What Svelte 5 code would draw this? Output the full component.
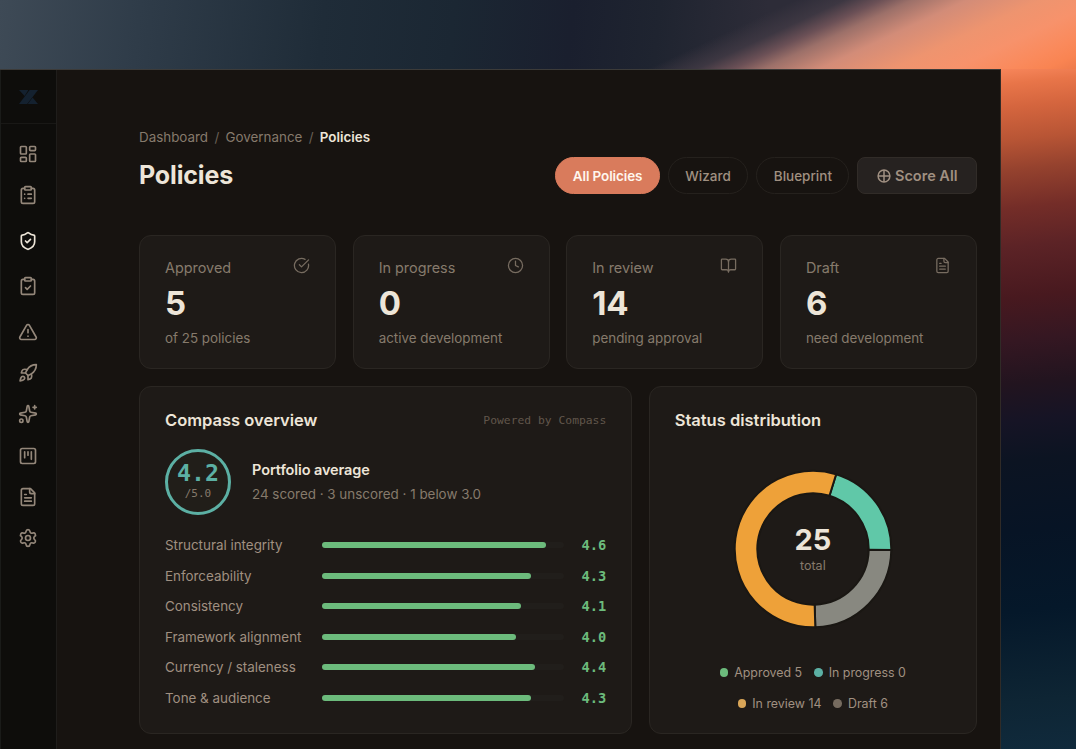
<script>
  // lucide outlines, 24x24 viewbox
  const icons = {
    dashboard:
      '<rect width="7" height="9" x="3" y="3" rx="1"/><rect width="7" height="5" x="14" y="3" rx="1"/><rect width="7" height="9" x="14" y="12" rx="1"/><rect width="7" height="5" x="3" y="16" rx="1"/>',
    clipboardList:
      '<rect width="8" height="4" x="8" y="2" rx="1"/><path d="M16 4h2a2 2 0 0 1 2 2v14a2 2 0 0 1-2 2H6a2 2 0 0 1-2-2V6a2 2 0 0 1 2-2h2"/><path d="M12 11h4M12 16h4M8 11h.01M8 16h.01"/>',
    shield:
      '<path d="M20 13c0 5-3.5 7.5-7.66 8.95a1 1 0 0 1-.67-.01C7.5 20.5 4 18 4 13V6a1 1 0 0 1 1-1c2 0 4.5-1.2 6.24-2.72a1.17 1.17 0 0 1 1.52 0C14.51 3.81 17 5 19 5a1 1 0 0 1 1 1z"/><path d="m9 12 2 2 4-4"/>',
    clipboardCheck:
      '<rect width="8" height="4" x="8" y="2" rx="1"/><path d="M16 4h2a2 2 0 0 1 2 2v14a2 2 0 0 1-2 2H6a2 2 0 0 1-2-2V6a2 2 0 0 1 2-2h2"/><path d="m9 14 2 2 4-4"/>',
    alert:
      '<path d="m21.73 18-8-14a2 2 0 0 0-3.48 0l-8 14A2 2 0 0 0 4 21h16a2 2 0 0 0 1.73-3"/><path d="M12 9v4M12 17h.01"/>',
    rocket:
      '<path d="M4.5 16.5c-1.5 1.26-2 5-2 5s3.74-.5 5-2c.71-.84.7-2.13-.09-2.91a2.18 2.18 0 0 0-2.91-.09z"/><path d="m12 15-3-3a22 22 0 0 1 2-3.95A12.88 12.88 0 0 1 22 2c0 2.72-.78 7.5-6 11a22.35 22.35 0 0 1-4 2z"/><path d="M9 12H4s.55-3.03 2-4c1.62-1.08 5 0 5 0"/><path d="M12 15v5s3.03-.55 4-2c1.08-1.62 0-5 0-5"/>',
    sparkles:
      '<path d="M11.017 2.814a1 1 0 0 1 1.966 0l1.051 5.558a2 2 0 0 0 1.594 1.594l5.558 1.051a1 1 0 0 1 0 1.966l-5.558 1.051a2 2 0 0 0-1.594 1.594l-1.051 5.558a1 1 0 0 1-1.966 0l-1.051-5.558a2 2 0 0 0-1.594-1.594l-5.558-1.051a1 1 0 0 1 0-1.966l5.558-1.051a2 2 0 0 0 1.594-1.594z"/><path d="M20 2v4M22 4h-4"/><circle cx="4" cy="20" r="2"/>',
    kanban:
      '<rect width="18" height="18" x="3" y="3" rx="2"/><path d="M8 7v7M12 7v4M16 7v9"/>',
    file:
      '<path d="M15 2H6a2 2 0 0 0-2 2v16a2 2 0 0 0 2 2h12a2 2 0 0 0 2-2V7Z"/><path d="M14 2v4a2 2 0 0 0 2 2h4"/><path d="M10 9H8M16 13H8M16 17H8"/>',
    settings:
      '<path d="M9.671 4.136a2.34 2.34 0 0 1 4.659 0 2.34 2.34 0 0 0 3.319 1.915 2.34 2.34 0 0 1 2.33 4.033 2.34 2.34 0 0 0 0 3.831 2.34 2.34 0 0 1-2.33 4.033 2.34 2.34 0 0 0-3.319 1.915 2.34 2.34 0 0 1-4.659 0 2.34 2.34 0 0 0-3.32-1.915 2.34 2.34 0 0 1-2.33-4.033 2.34 2.34 0 0 0 0-3.831A2.34 2.34 0 0 1 6.35 6.051a2.34 2.34 0 0 0 3.319-1.915"/><circle cx="12" cy="12" r="3"/>',
    check:
      '<path d="M21.801 10A10 10 0 1 1 17 3.335"/><path d="m9 11 3 3L22 4"/>',
    clock: '<circle cx="12" cy="12" r="10"/><path d="M12 6v6l4 2"/>',
    book: '<path d="M12 7v14"/><path d="M3 18a1 1 0 0 1-1-1V4a1 1 0 0 1 1-1h5a4 4 0 0 1 4 4 4 4 0 0 1 4-4h5a1 1 0 0 1 1 1v13a1 1 0 0 1-1 1h-6a3 3 0 0 0-3 3 3 3 0 0 0-3-3z"/>',
  };

  const navGroups = [
    ["dashboard", "clipboardList"],
    ["shield"],
    ["clipboardCheck"],
    ["alert", "rocket", "sparkles", "kanban", "file", "settings"],
  ];
  const active = "shield";

  const stats = [
    { label: "Approved", value: 5, note: "of 25 policies", icon: "check" },
    { label: "In progress", value: 0, note: "active development", icon: "clock" },
    { label: "In review", value: 14, note: "pending approval", icon: "book" },
    { label: "Draft", value: 6, note: "need development", icon: "file" },
  ];

  const scores = [
    { label: "Structural integrity", value: 4.6, fill: 92.3 },
    { label: "Enforceability", value: 4.3, fill: 86.2 },
    { label: "Consistency", value: 4.1, fill: 82 },
    { label: "Framework alignment", value: 4.0, fill: 80 },
    { label: "Currency / staleness", value: 4.4, fill: 88 },
    { label: "Tone & audience", value: 4.3, fill: 86.2 },
  ];

  const legend = [
    [
      { label: "Approved 5", tone: "green" },
      { label: "In progress 0", tone: "teal" },
    ],
    [
      { label: "In review 14", tone: "amber" },
      { label: "Draft 6", tone: "gray" },
    ],
  ];

  // donut slices, degrees clockwise from the top
  const slices = [
    { from: 17.2, to: 90.8, color: "#60c8a8" },
    { from: 90.8, to: 178.3, color: "#888880" },
    { from: 178.3, to: 377.2, color: "#eea139" },
  ];

  function point(r, deg) {
    const a = (deg * Math.PI) / 180;
    return `${80 + r * Math.sin(a)} ${80 - r * Math.cos(a)}`;
  }

  function slicePath({ from, to }) {
    const big = to - from > 180 ? 1 : 0;
    return `M${point(78.3, from)}A78.3 78.3 0 ${big} 1 ${point(78.3, to)}L${point(55.7, to)}A55.7 55.7 0 ${big} 0 ${point(55.7, from)}Z`;
  }
</script>

<div class="desktop">
  <div class="window">
    <aside class="sidebar">
      <div class="logo">
        <svg width="19" height="14" viewBox="0 0 19 14">
          <path d="M0 0h9.4L5.6 6z" />
          <path d="M10.6 0H19L8.2 14H0z" />
          <path d="M13.6 7.6 19 14H8.8z" />
        </svg>
      </div>
      <nav>
        {#each navGroups as group}
          <div class="nav-group">
            {#each group as name}
              <a href="#{name}" class="nav-item" class:active={name === active} aria-label={name}>
                <svg class="icon" viewBox="0 0 24 24">{@html icons[name]}</svg>
              </a>
            {/each}
          </div>
        {/each}
      </nav>
    </aside>

    <main>
      <div class="breadcrumb">
        <span>Dashboard</span><span class="sep">/</span><span>Governance</span><span class="sep">/</span><strong>Policies</strong>
      </div>
      <header>
        <h1>Policies</h1>
        <div class="actions">
          <button class="pill primary">All Policies</button>
          <button class="pill">Wizard</button>
          <button class="pill">Blueprint</button>
          <button class="score-all">
            <svg width="14" height="14" viewBox="0 0 14 14">
              <circle cx="7" cy="7" r="5.9" />
              <path d="M1 7h12M7 1v12" />
            </svg>
            Score All
          </button>
        </div>
      </header>

      <section class="stats">
        {#each stats as stat}
          <div class="card stat">
            <div class="stat-head">
              <span>{stat.label}</span>
              <svg class="icon" viewBox="0 0 24 24">{@html icons[stat.icon]}</svg>
            </div>
            <div class="stat-value">{stat.value}</div>
            <div class="stat-note">{stat.note}</div>
          </div>
        {/each}
      </section>

      <section class="panels">
        <div class="card panel">
          <div class="panel-head">
            <h2>Compass overview</h2>
            <span class="powered">Powered by Compass</span>
          </div>
          <div class="portfolio">
            <div class="ring">
              <b>4.2</b>
              <small>/5.0</small>
            </div>
            <div>
              <div class="portfolio-title">Portfolio average</div>
              <div class="portfolio-note">24 scored · 3 unscored · 1 below 3.0</div>
            </div>
          </div>
          <div class="scores">
            {#each scores as score}
              <div class="score">
                <span class="score-label">{score.label}</span>
                <div class="track"><div class="fill" style={`width: ${score.fill}%`}></div></div>
                <span class="score-value">{score.value.toFixed(1)}</span>
              </div>
            {/each}
          </div>
        </div>

        <div class="card panel">
          <div class="panel-head">
            <h2>Status distribution</h2>
          </div>
          <div class="donut">
            <svg width="160" height="160" viewBox="0 0 160 160">
              {#each slices as slice}
                <path d={slicePath(slice)} fill={slice.color} />
              {/each}
            </svg>
            <div class="donut-label">
              <b>25</b>
              <span>total</span>
            </div>
          </div>
          <div class="legend">
            {#each legend as row}
              <div class="legend-row">
                {#each row as item}
                  <span class="legend-item"><i class={item.tone}></i>{item.label}</span>
                {/each}
              </div>
            {/each}
          </div>
        </div>
      </section>
    </main>
  </div>
</div>

<style>
  :global(body) {
    margin: 0;
    overflow: hidden;
  }
  .desktop {
    width: 1076px;
    height: 749px;
    box-sizing: border-box;
    padding-top: 69px;
    overflow: hidden;
    font-family: Inter, sans-serif;
    color: #ede5d8;
    /* sunset streak over the slate sky, then the strip right of the window */
    background:
      linear-gradient(
          155deg,
          transparent 65%,
          #3d3742 69%,
          #6b5056 72%,
          #9c7069 74.5%,
          #d28c78 79%,
          #ee946f 85%,
          #f7926b 90%,
          #fa8a5c 94.5%,
          #f98452 97.5%,
          #ee7b4c 100%
        )
        0 0 / 1076px 69px no-repeat,
      linear-gradient(96deg, #3e4a56, #2f3c49 13%, #1f2c38 30%, #1b2733 42%, #1a1f2e 53%, #1f2430 61%, #2d2c38 71%)
        0 0 / 1076px 69px no-repeat,
      linear-gradient(
          174deg,
          #f6855a 69px,
          #e87549 84px,
          #d4653e 108px,
          #b85535 140px,
          #95422e 170px,
          #742d28 208px,
          #5c2326 247px,
          #48191f 297px,
          #351722 340px,
          #22141f 383px,
          #161425 420px,
          #0c1422 460px,
          #071425 530px,
          #05182a 610px,
          #0e2534 700px,
          #102a3c 752px
        )
        1001px 0 / 75px 749px no-repeat;
  }
  .window {
    display: flex;
    width: 1001px;
    height: 680px;
    box-sizing: border-box;
    border-top: 1px solid #3c3b39;
    border-right: 1px solid #302b27;
    background: #171310;
  }

  /* sidebar */
  .sidebar {
    width: 57px;
    box-sizing: border-box;
    border-left: 1px solid #1a1b19;
    border-right: 1px solid #1f1d1b;
    background: #0e0d0b;
  }
  .logo {
    display: flex;
    align-items: center;
    justify-content: center;
    height: 53px;
    padding-right: 1px;
    border-bottom: 1px solid #191816;
  }
  .logo svg {
    fill: #14212f;
  }
  nav {
    display: flex;
    flex-direction: column;
    gap: 4.2px;
    padding: 9.5px 1px 0 0;
  }
  .nav-item {
    display: flex;
    align-items: center;
    justify-content: center;
    height: 41.3px;
    color: #94877a;
  }
  .nav-item.active {
    color: #ede5d8;
  }
  .icon {
    fill: none;
    stroke: currentColor;
    stroke-linecap: round;
    stroke-linejoin: round;
  }
  .nav-item .icon {
    width: 20px;
    height: 20px;
    stroke-width: 2;
  }

  /* header */
  main {
    flex: 1;
    padding: 57px 23px 0 82px;
  }
  .breadcrumb {
    display: flex;
    gap: 6.3px;
    height: 20px;
    font-size: 13.4px;
    line-height: 21px;
    color: #867a6c;
  }
  .sep {
    color: #6b6157;
  }
  .breadcrumb strong {
    font-weight: 600;
    color: #ede5d8;
  }
  header {
    display: flex;
    align-items: center;
    justify-content: space-between;
    height: 37px;
    margin-top: 10px;
  }
  h1 {
    margin: -2px 0 0;
    font-size: 25px;
    font-weight: 700;
    letter-spacing: -0.15px;
  }
  .actions {
    display: flex;
    gap: 8px;
  }
  button {
    display: flex;
    align-items: center;
    height: 37px;
    padding: 0 16.5px;
    border: 1px solid #25211d;
    background: none;
    color: #a09081;
    font-family: inherit;
    font-size: 13.5px;
    font-weight: 500;
    white-space: nowrap;
  }
  .pill {
    border-radius: 19px;
  }
  .primary {
    border-color: #d97b5c;
    background: #d97b5c;
    color: #fff6ee;
    font-weight: 600;
    letter-spacing: -0.12px;
  }
  .score-all {
    gap: 4px;
    padding: 0 18.5px;
    border-color: #312c28;
    border-radius: 8px;
    background: #262220;
    font-size: 14.5px;
    font-weight: 600;
  }
  .score-all svg {
    fill: none;
    stroke: currentColor;
    stroke-width: 1.5;
  }

  .card {
    box-sizing: border-box;
    border: 1px solid #2a2622;
    border-radius: 12px;
    background: #1e1a17;
  }

  /* stat cards */
  .stats {
    display: grid;
    grid-template-columns: repeat(4, 1fr);
    gap: 16.5px;
    margin-top: 41px;
  }
  .stat {
    height: 134px;
    padding: 21px 25px 0;
  }
  .stat-head {
    display: flex;
    justify-content: space-between;
    height: 22px;
    font-size: 14.4px;
    line-height: 22px;
    color: #867a6c;
  }
  .stat-head .icon {
    width: 17px;
    height: 17px;
    stroke-width: 1.8;
    color: #776c60;
  }
  .stat-value {
    font-size: 33px;
    font-weight: 700;
    line-height: 48px;
    letter-spacing: -0.2px;
  }
  .stat-note {
    font-size: 13.4px;
    line-height: 23px;
    color: #867a6c;
  }

  /* panels */
  .panels {
    display: grid;
    grid-template-columns: 3.005fr 2fr;
    gap: 16.4px;
    margin-top: 17px;
  }
  .panel {
    height: 348px;
    padding: 22px 25px 0;
  }
  .panel-head {
    display: flex;
    align-items: center;
    justify-content: space-between;
    height: 22px;
  }
  h2 {
    margin: 0;
    font-size: 16.5px;
    font-weight: 600;
  }
  .powered {
    font-family: "DejaVu Sans Mono", monospace;
    font-size: 11.35px;
    color: #61564b;
  }
  .portfolio {
    display: flex;
    align-items: center;
    gap: 21px;
    margin-top: 18px;
  }
  .ring {
    display: flex;
    flex-direction: column;
    align-items: center;
    width: 66px;
    height: 66px;
    box-sizing: border-box;
    padding-top: 8px;
    border: 3px solid #5cb0a4;
    border-radius: 50%;
    background: #211e19;
    font-family: "DejaVu Sans Mono", monospace;
  }
  .ring b {
    font-size: 23.3px;
    line-height: 26px;
    color: #5cb0a4;
  }
  .ring small {
    font-size: 11px;
    line-height: 16px;
    color: #867a6c;
  }
  .portfolio-title {
    font-size: 14.5px;
    font-weight: 600;
    line-height: 24px;
    letter-spacing: -0.1px;
  }
  .portfolio-note {
    font-size: 13.4px;
    line-height: 24px;
    color: #867a6c;
  }
  .scores {
    margin-top: 15px;
  }
  .score {
    display: flex;
    align-items: center;
    height: 30.5px;
    font-size: 13.4px;
  }
  .score-label {
    width: 157px;
    color: #a09081;
  }
  .track {
    flex: 1;
    height: 6px;
    border-radius: 3px;
    background: #211e1b;
  }
  .fill {
    height: 6px;
    border-radius: 3px;
    background: #6cbb7c;
  }
  .score-value {
    width: 42px;
    text-align: right;
    font-family: "DejaVu Sans Mono", monospace;
    font-size: 13.7px;
    font-weight: 700;
    color: #6cbb7c;
  }

  .donut {
    display: grid;
    place-items: center;
    margin-top: 38px;
  }
  .donut svg,
  .donut-label {
    grid-area: 1 / 1;
  }
  .donut path {
    stroke: #1a1713;
    stroke-width: 2;
  }
  .donut-label {
    display: flex;
    flex-direction: column;
    align-items: center;
  }
  .donut-label b {
    font-size: 29px;
    font-weight: 700;
    line-height: 33px;
    letter-spacing: -0.1px;
  }
  .donut-label span {
    font-size: 12.5px;
    line-height: 20px;
    color: #867a6c;
  }
  .legend {
    margin-top: 28px;
  }
  .legend-row {
    display: flex;
    justify-content: center;
    gap: 12px;
    height: 31px;
    line-height: 31px;
    font-size: 12.4px;
    color: #a09081;
  }
  .legend-item {
    display: flex;
    align-items: center;
    gap: 6px;
  }
  .legend i {
    width: 8.5px;
    height: 8.5px;
    border-radius: 50%;
  }
  .green {
    background: #6cbb7c;
  }
  .teal {
    background: #5cb0a4;
  }
  .amber {
    background: #d9a557;
  }
  .gray {
    background: #766b5f;
  }
</style>
